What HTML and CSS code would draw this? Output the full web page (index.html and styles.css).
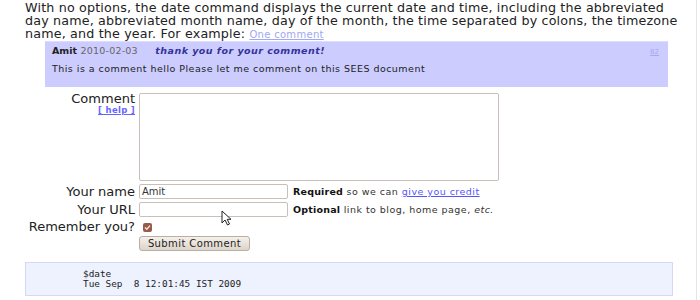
FILE: index.html
```html
<!DOCTYPE html>
<html lang="en">
  <head>
    <meta charset="UTF-8" />
    <title>date command</title>
    <link rel="stylesheet" href="styles.css">
  </head>
  <body>
    <div class="page">
      <p class="intro">
        With no options, the date command displays the current date and time, including the abbreviated<br>
        day name, abbreviated month name, day of the month, the time separated by colons, the timezone<br>
        name, and the year. For example: <a href="#" class="comment-count">One comment</a>
      </p>

      <div class="comment">
        <div class="comment-head">
          <b class="comment-author">Amit</b>
          <span class="comment-date">2010-02-03</span>
          <span class="comment-title">thank you for your comment!</span>
          <a href="#" class="comment-num">82</a>
        </div>
        <div class="comment-body">This is a comment hello Please let me comment on this SEES document</div>
      </div>

      <form class="comment-form">
        <div class="form-label label-top">
          Comment
          <a href="#" class="help-link">[ help ]</a>
        </div>
        <div><textarea class="comment-text"></textarea></div>

        <div class="form-label">Your name</div>
        <div class="form-field">
          <input type="text" class="text-input" value="Amit" />
          <span class="hint"><b>Required</b> so we can <a href="#">give you credit</a></span>
        </div>

        <div class="form-label">Your URL</div>
        <div class="form-field">
          <input type="text" class="text-input" />
          <span class="hint"><b>Optional</b> link to blog, home page, <i>etc.</i></span>
        </div>

        <div class="form-label">Remember you?</div>
        <div class="form-field check-field">
          <span class="check">
            <svg width="9" height="9" viewBox="0 0 9 9"><path d="M2 4.6 L3.8 6.3 L7 2.6" fill="none" stroke="#f3e6e0" stroke-width="1.4"/></svg>
          </span>
        </div>

        <div></div>
        <div><button type="button" class="submit-btn">Submit Comment</button></div>
      </form>

      <pre class="example">$date
Tue Sep  8 12:01:45 IST 2009</pre>

      <svg class="cursor" width="14" height="18" viewBox="0 0 14 18">
        <path d="M1 1 L1 13 L4 10 L6.5 15 L8.5 14 L6.2 9.3 L10 9.3 Z" fill="#fff" stroke="#222" stroke-width="1"/>
      </svg>
    </div>
  </body>
</html>
```

FILE: styles.css
```css
body {
  margin: 0;
  background: #ffffff;
  font-family: "DejaVu Sans", sans-serif;
  color: #222;
}

.page {
  position: relative;
  width: 697px;
  height: 300px;
  border-right: 1px solid #e4e4e4;
  padding: 1px 0 0 25px;
  box-sizing: border-box;
  overflow: hidden;
}

.intro {
  margin: 0;
  font-size: 12.7px;
  line-height: 13px;
  letter-spacing: 0.17px;
  white-space: nowrap;
}

.comment-count {
  font-size: 10px;
  letter-spacing: 0.3px;
  color: #a0a8f0;
}

.comment {
  margin: 0 0 0 20px;
  width: 623px;
  height: 46px;
  box-sizing: border-box;
  background: #ccccff;
  border-top: 1px solid #dcdcff;
  padding: 2px 7px;
  font-size: 9.5px;
  letter-spacing: 0.47px;
  position: relative;
}

.comment-head {
  line-height: 13px;
}

.comment-author {
  color: #222;
  letter-spacing: 0;
}

.comment-date {
  color: #666;
  letter-spacing: 0.2px;
  margin-right: 14px;
}

.comment-title {
  color: #333399;
  font-weight: bold;
  font-style: italic;
}

.comment-num {
  position: absolute;
  right: 9px;
  top: 4px;
  font-size: 7px;
  letter-spacing: 0;
  color: #a8a8f0;
}

.comment-body {
  margin-top: 5px;
  line-height: 13px;
}

.comment-form {
  display: grid;
  grid-template-columns: 110px auto;
  column-gap: 4px;
  row-gap: 3px;
  margin-top: 6px;
  align-items: center;
}

.form-label {
  text-align: right;
  font-size: 13px;
  line-height: 13px;
  color: #222;
}

.label-top {
  align-self: start;
  margin-top: -1px;
}

.help-link {
  display: block;
  font-size: 8.5px;
  line-height: 10px;
  letter-spacing: 0.3px;
  font-weight: bold;
  color: #6666ff;
}

.comment-text {
  display: block;
  width: 360px;
  height: 88px;
  box-sizing: border-box;
  border: 1px solid #c8c0b8;
  border-radius: 2px;
  resize: none;
  margin: 0;
}

.form-field {
  display: flex;
  align-items: center;
  gap: 5px;
  height: 15px;
}

.check-field {
  height: 11px;
}

.text-input {
  width: 149px;
  height: 15px;
  box-sizing: border-box;
  border: 1px solid #c8c0b8;
  border-radius: 2px;
  padding: 0 2px;
  margin: 0;
  font-family: "DejaVu Sans", sans-serif;
  font-size: 10px;
  color: #333;
}

.hint {
  font-size: 9.5px;
  letter-spacing: 0.47px;
  color: #333;
}

.hint b {
  color: #111;
  letter-spacing: 0.2px;
}

.hint a {
  color: #5555ff;
}

.check {
  display: inline-flex;
  width: 9px;
  height: 9px;
  margin: 1px 0 0 4px;
  border-radius: 2px;
  background: #9a5a48;
}

.submit-btn {
  display: block;
  width: 111px;
  height: 15px;
  padding: 0;
  margin: 0;
  border: 1px solid #b8aea4;
  border-radius: 3px;
  background: linear-gradient(#f4f0ea, #ddd4ca);
  font-family: "DejaVu Sans", sans-serif;
  font-size: 10px;
  line-height: 13px;
  letter-spacing: 0.4px;
  color: #222;
}

.example {
  margin: 11px 0 0 0;
  width: 648px;
  height: 34px;
  box-sizing: border-box;
  background: #eef2ff;
  border: 1px solid #d4d8f4;
  padding: 6px 0 0 57px;
  font-family: "DejaVu Sans Mono", monospace;
  font-size: 9.4px;
  line-height: 9.5px;
  color: #222;
}

.cursor {
  position: absolute;
  left: 221px;
  top: 210px;
}
```
